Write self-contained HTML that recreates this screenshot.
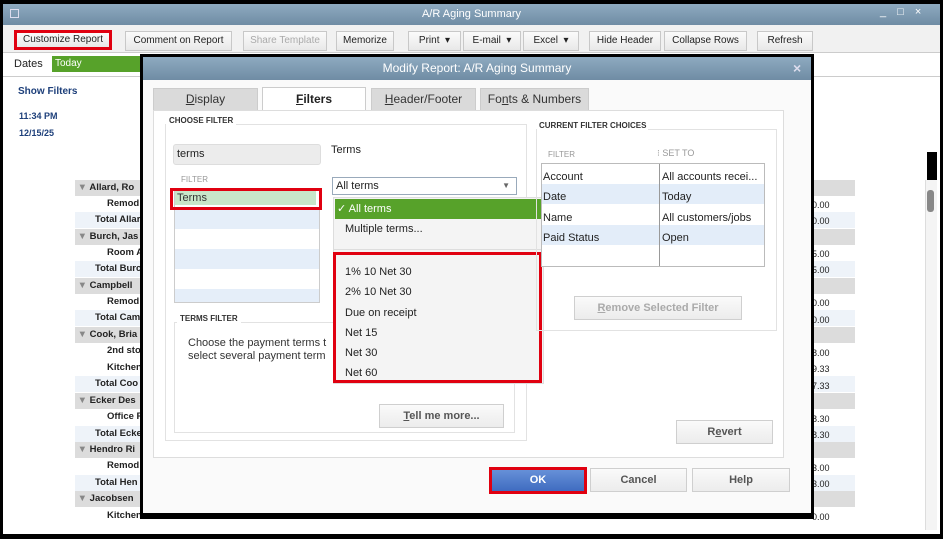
<!DOCTYPE html>
<html><head><meta charset="utf-8"><style>
*{box-sizing:border-box;margin:0;padding:0}
body{width:943px;height:539px;background:#000;position:relative;overflow:hidden;font-family:"Liberation Sans",sans-serif;font-size:11px;color:#222}
.a{position:absolute}
.btn{position:absolute;background:linear-gradient(#fbfbfb,#e8e8e8);border:1px solid #c8c8c8;font-size:10px;font-weight:normal;color:#222;text-align:center;line-height:18px;font-family:"Liberation Sans Narrow","Liberation Sans",sans-serif}
.row{position:absolute;left:75px;width:780px;height:16px;font-size:9.5px;font-weight:bold;line-height:16px;color:#222}
.g{background:#dcdcdc}.b{background:#eef3f9}
.dbtn{position:absolute;background:linear-gradient(#fafafa,#ececec);border:1px solid #cfcfcf;font-size:12px;font-weight:bold;color:#555;text-align:center}
.red{position:absolute;border:3px solid #e00010}
.num{position:absolute;left:812px;font-size:9px;color:#222}
</style></head><body>
<div class="a" style="left:3px;top:4px;width:937px;height:530px;background:#fff"></div>
<div class="a" style="left:3px;top:4px;width:937px;height:21px;background:linear-gradient(#8eaac0,#6f8ca4);color:#fff;font-size:11px;text-align:center;line-height:21px">A/R Aging Summary</div>
<div class="a" style="left:10px;top:9px;width:9px;height:9px;border:1px solid #dde;"></div>
<div class="a" style="left:880px;top:6px;color:#fff;font-size:11px;letter-spacing:4px">_ □ ×</div>
<div class="a" style="left:3px;top:25px;width:937px;height:28px;background:#f1f1f1;border-bottom:1px solid #ccc"></div>
<div class="btn" style="left:14px;top:30px;width:98px;height:20px;border:3px solid #e00010;line-height:14px">Customize Report</div>
<div class="btn" style="left:125px;top:31px;width:107px">Comment on Report</div>
<div class="btn" style="left:243px;top:31px;width:84px;color:#aaa">Share Template</div>
<div class="btn" style="left:336px;top:31px;width:58px">Memorize</div>
<div class="btn" style="left:408px;top:31px;width:53px">Print &nbsp;▾</div>
<div class="btn" style="left:463px;top:31px;width:58px">E-mail &nbsp;▾</div>
<div class="btn" style="left:523px;top:31px;width:56px">Excel &nbsp;▾</div>
<div class="btn" style="left:589px;top:31px;width:72px">Hide Header</div>
<div class="btn" style="left:664px;top:31px;width:83px">Collapse Rows</div>
<div class="btn" style="left:757px;top:31px;width:56px">Refresh</div>
<div class="a" style="left:14px;top:58px;font-size:11px">Dates</div>
<div class="a" style="left:52px;top:56px;width:90px;height:16px;background:#57a22a;color:#fff;font-size:10px;padding-left:3px;line-height:16px">Today</div>
<div class="a" style="left:3px;top:76px;width:937px;height:1px;background:#ccc"></div>
<div class="a" style="left:18px;top:86px;font-size:10px;font-weight:bold;color:#1d3f7a">Show Filters</div>
<div class="a" style="left:19px;top:111px;font-size:9px;font-weight:bold;color:#1d3f7a">11:34 PM</div>
<div class="a" style="left:19px;top:128px;font-size:9px;font-weight:bold;color:#1d3f7a">12/15/25</div>
<div class="row g" style="top:180px"><span style="color:#888">&nbsp;▼</span> Allard, Ro</div>
<div class="row" style="top:196px;padding-left:32px">Remod</div><div class="num" style="top:200px">0.00</div>
<div class="row b" style="top:212px;padding-left:20px">Total Allar</div><div class="num" style="top:216px">0.00</div>
<div class="row g" style="top:229px"><span style="color:#888">&nbsp;▼</span> Burch, Jas</div>
<div class="row" style="top:245px;padding-left:32px">Room A</div><div class="num" style="top:249px">5.00</div>
<div class="row b" style="top:261px;padding-left:20px">Total Burc</div><div class="num" style="top:265px">5.00</div>
<div class="row g" style="top:278px"><span style="color:#888">&nbsp;▼</span> Campbell</div>
<div class="row" style="top:294px;padding-left:32px">Remod</div><div class="num" style="top:298px">0.00</div>
<div class="row b" style="top:310px;padding-left:20px">Total Cam</div><div class="num" style="top:315px">0.00</div>
<div class="row g" style="top:327px"><span style="color:#888">&nbsp;▼</span> Cook, Bria</div>
<div class="row" style="top:343px;padding-left:32px">2nd sto</div><div class="num" style="top:348px">8.00</div>
<div class="row" style="top:360px;padding-left:32px">Kitchen</div><div class="num" style="top:364px">9.33</div>
<div class="row b" style="top:376px;padding-left:20px">Total Coo</div><div class="num" style="top:381px">7.33</div>
<div class="row g" style="top:393px"><span style="color:#888">&nbsp;▼</span> Ecker Des</div>
<div class="row" style="top:409px;padding-left:32px">Office F</div><div class="num" style="top:414px">8.30</div>
<div class="row b" style="top:426px;padding-left:20px">Total Ecke</div><div class="num" style="top:430px">8.30</div>
<div class="row g" style="top:442px"><span style="color:#888">&nbsp;▼</span> Hendro Ri</div>
<div class="row" style="top:458px;padding-left:32px">Remod</div><div class="num" style="top:463px">3.00</div>
<div class="row b" style="top:475px;padding-left:20px">Total Hen</div><div class="num" style="top:479px">3.00</div>
<div class="row g" style="top:491px"><span style="color:#888">&nbsp;▼</span> Jacobsen</div>
<div class="row" style="top:508px;padding-left:32px">Kitchen</div><div class="num" style="top:512px">0.00</div>
<div class="a" style="left:925px;top:180px;width:12px;height:350px;background:#f4f4f4;border-left:1px solid #ddd"></div>
<div class="a" style="left:927px;top:190px;width:7px;height:22px;background:#888;border-radius:3px"></div>
<div class="a" style="left:927px;top:152px;width:10px;height:28px;background:#000"></div>
<div class="a" style="left:140px;top:54px;width:674px;height:465px;background:#000"></div>
<div class="a" style="left:143px;top:57px;width:668px;height:23px;background:linear-gradient(#8eaac0,#6f8ca4);color:#fff;font-size:12px;text-align:center;line-height:23px">Modify Report: A/R Aging Summary</div>
<div class="a" style="left:793px;top:60px;color:#dde;font-size:14px;font-weight:bold">×</div>
<div class="a" style="left:143px;top:80px;width:668px;height:433px;background:#fafafa"></div>
<div class="a" style="left:153px;top:88px;width:105px;height:23px;background:#dadada;border:1px solid #ccc;text-align:center;line-height:21px;font-size:12px;color:#333"><u>D</u>isplay</div>
<div class="a" style="left:262px;top:87px;width:104px;height:24px;background:#fff;border:1px solid #ccc;border-bottom:none;text-align:center;line-height:22px;font-size:12px;font-weight:bold;color:#222"><u>F</u>ilters</div>
<div class="a" style="left:371px;top:88px;width:105px;height:23px;background:#dadada;border:1px solid #ccc;text-align:center;line-height:21px;font-size:12px;color:#333"><u>H</u>eader/Footer</div>
<div class="a" style="left:480px;top:88px;width:109px;height:23px;background:#dadada;border:1px solid #ccc;text-align:center;line-height:21px;font-size:12px;color:#333">Fo<u>n</u>ts &amp; Numbers</div>
<div class="a" style="left:153px;top:110px;width:631px;height:348px;background:#fff;border:1px solid #ddd"></div>
<div class="a" style="left:165px;top:124px;width:362px;height:317px;border:1px solid #e2e2e2"></div>
<div class="a" style="left:166px;top:116px;background:#fff;padding:0 3px;font-size:8px;font-weight:bold;color:#333">CHOOSE FILTER</div>
<div class="a" style="left:173px;top:144px;width:148px;height:21px;background:#ececec;border:1px solid #ddd;border-radius:3px;font-size:11px;line-height:19px;padding-left:3px">terms</div>
<div class="a" style="left:331px;top:144px;font-size:11px">Terms</div>
<div class="a" style="left:181px;top:175px;font-size:8px;color:#999">FILTER</div>
<div class="a" style="left:174px;top:188px;width:146px;height:115px;border:1px solid #ccc;background:repeating-linear-gradient(#fff 0 20px,#e5eef9 20px 40px)"></div>
<div class="a" style="left:175px;top:191px;width:141px;height:14px;background:#c8e6c9;font-size:11px;padding-left:2px;line-height:14px;color:#333">Terms</div>
<div class="red" style="left:170px;top:188px;width:152px;height:22px"></div>
<div class="a" style="left:332px;top:177px;width:185px;height:18px;border:1px solid #9ab;font-size:11px;padding-left:3px;line-height:16px;background:#fff">All terms<span style="position:absolute;right:6px;color:#666;font-size:8px">▼</span></div>
<div class="a" style="left:174px;top:322px;width:341px;height:111px;border:1px solid #e2e2e2"></div>
<div class="a" style="left:177px;top:314px;background:#fff;padding:0 3px;font-size:8px;font-weight:bold;color:#333">TERMS FILTER</div>
<div class="a" style="left:188px;top:337px;font-size:11px;line-height:13px;color:#333">Choose the payment terms t<br>select several payment term</div>
<div class="dbtn" style="left:379px;top:404px;width:125px;height:24px;line-height:22px;font-size:11px"><u>T</u>ell me more...</div>
<div class="a" style="left:333px;top:197px;width:211px;height:187px;background:#f4f4f4;border:1px solid #ddd"></div>
<div class="a" style="left:335px;top:199px;width:206px;height:20px;background:#57a22a;color:#fff;font-size:11px;line-height:20px;padding-left:2px">✓ All terms</div>
<div class="a" style="left:345px;top:223px;font-size:11px">Multiple terms...</div>
<div class="a" style="left:333px;top:249px;width:211px;height:1px;background:#ddd"></div>
<div class="red" style="left:333px;top:252px;width:209px;height:131px"></div>
<div class="a" style="left:345px;top:262px;font-size:11px;line-height:20.3px">1% 10 Net 30<br>2% 10 Net 30<br>Due on receipt<br>Net 15<br>Net 30<br>Net 60</div>
<div class="a" style="left:536px;top:129px;width:241px;height:202px;border:1px solid #e2e2e2"></div>
<div class="a" style="left:537px;top:121px;background:#fff;padding:0 2px;font-size:8px;font-weight:bold;color:#333">CURRENT FILTER CHOICES</div>
<div class="a" style="left:548px;top:150px;font-size:8px;color:#999">FILTER</div>
<div class="a" style="left:657px;top:148px;font-size:9px;color:#999">⁝ SET TO</div>
<div class="a" style="left:541px;top:163px;width:224px;height:104px;border:1px solid #bbb;background:#fff"></div>
<div class="a" style="left:542px;top:184px;width:222px;height:20px;background:#e3edf9"></div>
<div class="a" style="left:542px;top:225px;width:222px;height:20px;background:#e3edf9"></div>
<div class="a" style="left:659px;top:164px;width:1px;height:102px;background:#999"></div>
<div class="a" style="left:543px;top:167px;font-size:11px;line-height:20.3px">Account<br>Date<br>Name<br>Paid Status</div>
<div class="a" style="left:662px;top:167px;font-size:11px;line-height:20.3px">All accounts recei...<br>Today<br>All customers/jobs<br>Open</div>
<div class="dbtn" style="left:574px;top:296px;width:168px;height:24px;line-height:22px;color:#aaa;font-size:11px"><u>R</u>emove Selected Filter</div>
<div class="dbtn" style="left:676px;top:420px;width:97px;height:24px;line-height:22px;font-size:11px">R<u>e</u>vert</div>
<div class="a" style="left:489px;top:467px;width:98px;height:27px;background:#e00010"></div>
<div class="a" style="left:492px;top:470px;width:92px;height:21px;background:linear-gradient(#6690d8,#3f6cc0);color:#fff;font-size:11px;font-weight:bold;text-align:center;line-height:21px">OK</div>
<div class="dbtn" style="left:590px;top:468px;width:97px;height:24px;line-height:22px;font-size:11px">Cancel</div>
<div class="dbtn" style="left:692px;top:468px;width:98px;height:24px;line-height:22px;font-size:11px">Help</div>
</body></html>
